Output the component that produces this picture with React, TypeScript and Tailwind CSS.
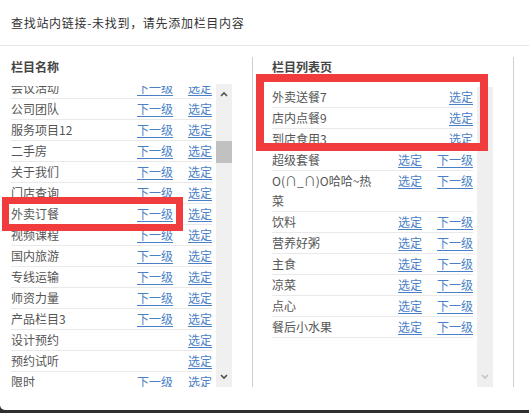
import React from 'react';

const font = { fontFamily: '"Noto Sans CJK SC", "Noto Sans", sans-serif' };

const leftItems: { name: string; sub: boolean }[] = [
  { name: '会议活动', sub: true },
  { name: '公司团队', sub: true },
  { name: '服务项目12', sub: true },
  { name: '二手房', sub: true },
  { name: '关于我们', sub: true },
  { name: '门店查询', sub: true },
  { name: '外卖订餐', sub: true },
  { name: '视频课程', sub: true },
  { name: '国内旅游', sub: true },
  { name: '专线运输', sub: true },
  { name: '师资力量', sub: true },
  { name: '产品栏目3', sub: true },
  { name: '设计预约', sub: false },
  { name: '预约试听', sub: false },
  { name: '限时', sub: true },
  { name: '新闻中心', sub: true },
];

const topRight = ['外卖送餐7', '店内点餐9', '到店食用3'];
const rightItems = ['超级套餐', 'O(∩_∩)O哈哈~热菜', '饮料', '营养好粥', '主食', '凉菜', '点心', '餐后小水果'];

const Chevron = ({ up, color }: { up?: boolean; color: string }) => (
  <svg width="8" height="6" viewBox="0 0 8 6">
    <path d={up ? 'M1 5 L4 2 L7 5' : 'M1 1 L4 4 L7 1'} fill="none" stroke={color} strokeWidth="1.6" />
  </svg>
);

const Link = ({ children }: { children: React.ReactNode }) => (
  <span className="text-[#4a80c6] underline underline-offset-2 decoration-[#4a80c6]">{children}</span>
);

export default function App() {
  return (
    <div className="w-[529px] h-[413px] bg-[#2f2f2f] relative overflow-hidden" style={font}>
      <div className="h-[410px] bg-white rounded-bl-[5px] flex flex-col">
        {/* Header */}
        <div className="h-[46px] border-b border-[#e6e6e6] px-[11px] flex items-center text-[12px] tracking-[0.7px] text-[#333]">
          查找站内链接-未找到，请先添加栏目内容
        </div>

        {/* Body */}
        <div className="flex pt-[11px] text-[12px] leading-[20px]">
          {/* Left */}
          <div className="w-[252px] pl-[11px] flex flex-col">
            <div className="h-[20px] font-bold text-[#444]">栏目名称</div>
            <div className="mt-[9px] h-[301px] flex">
              <div className="w-[201px] overflow-hidden">
                <div className="mt-[-8px]">
                  {leftItems.map((it) => (
                    <div key={it.name} className="h-[21px] border-b border-[#e9e9e9] grid grid-cols-[126px_51px_24px] text-[#555]">
                      <span>{it.name}</span>
                      <span>{it.sub ? <Link>下一级</Link> : null}</span>
                      <span><Link>选定</Link></span>
                    </div>
                  ))}
                </div>
              </div>
              <div className="ml-[4px] mt-[-2px] w-[16px] h-[303px] bg-[#f0f0f0] flex flex-col items-center">
                <div className="h-[17px] flex items-center justify-center pt-[2px]">
                  <Chevron up color="#505050" />
                </div>
                <div className="mt-[40px] w-[16px] h-[22px] bg-[#c1c1c1]" />
                <div className="flex-1" />
                <div className="h-[17px] flex items-center justify-center pb-[4px]">
                  <Chevron color="#505050" />
                </div>
              </div>
            </div>
          </div>

          {/* Right */}
          <div className="w-[262px] h-[330px] border-l border-r border-[#cfcfcf] pl-[19px] flex flex-col">
            <div className="h-[20px] font-bold text-[#444]">栏目列表页</div>
            <div className="mt-[10px] h-[300px] flex">
              <div className="w-[201px]">
                {topRight.map((n) => (
                  <div key={n} className="h-[21px] border-b border-[#e9e9e9] flex justify-between text-[#555]">
                    <span>{n}</span>
                    <Link>选定</Link>
                  </div>
                ))}
                {rightItems.map((n) => (
                  <div key={n} className="border-b border-[#e9e9e9] grid grid-cols-[126px_39px_36px] items-start text-[#555]">
                    <span className="max-w-[102px]">{n}</span>
                    <span><Link>选定</Link></span>
                    <span><Link>下一级</Link></span>
                  </div>
                ))}
              </div>
              <div className="ml-[4px] w-[16px] h-full bg-[#efefef] flex flex-col items-center">
                <div className="h-[17px] flex items-center justify-center">
                  <Chevron up color="#c4c4c4" />
                </div>
                <div className="flex-1" />
                <div className="h-[17px] flex items-center justify-center pb-[4px]">
                  <Chevron color="#c4c4c4" />
                </div>
              </div>
            </div>
          </div>
        </div>
      </div>

      {/* Annotation boxes */}
      <div className="absolute left-[2px] top-[197px] w-[181px] h-[34px] border-[7px] border-[#f03c3c]" />
      <div className="absolute left-[256px] top-[74px] w-[232px] h-[77px] border-[8px] border-[#f03c3c]" />
    </div>
  );
}
